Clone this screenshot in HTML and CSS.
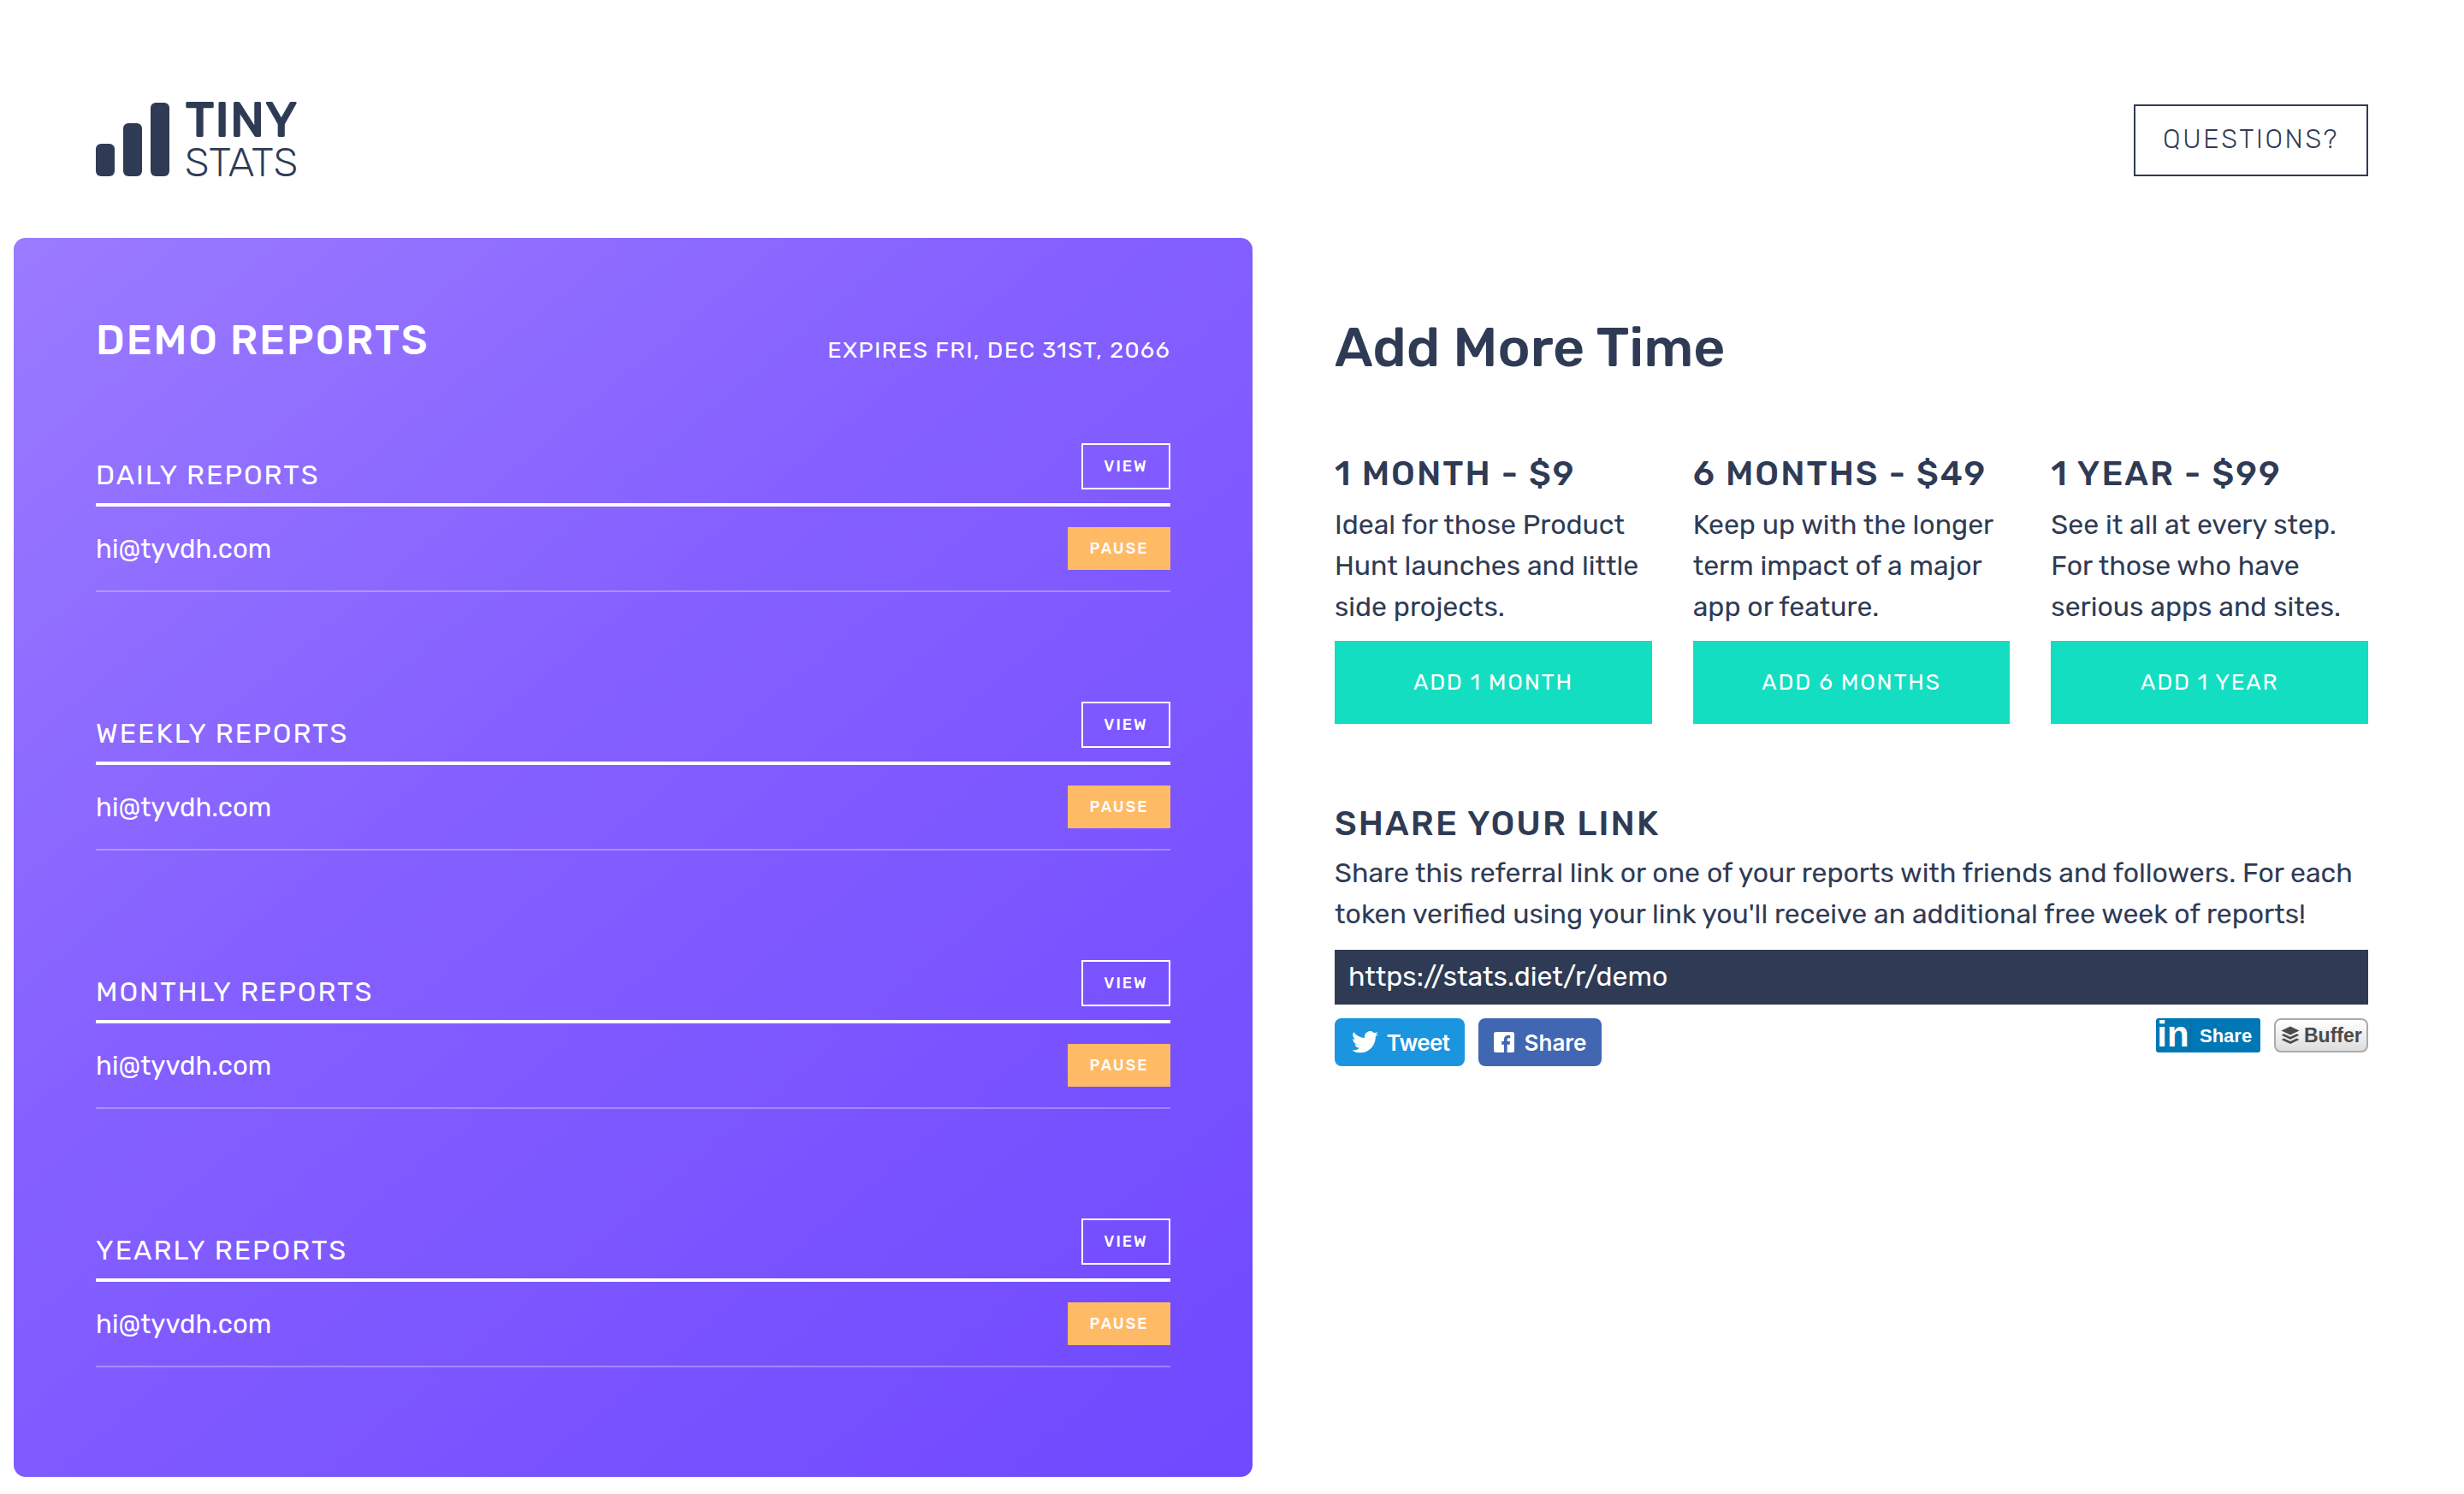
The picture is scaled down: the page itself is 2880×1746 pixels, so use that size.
FILE: index.html
```html
<!DOCTYPE html>
<html lang="en">
<head>
<meta charset="utf-8">
<title>Tiny Stats</title>
<link rel="stylesheet" href="styles.css">
</head>
<body>
<header class="top">
  <div class="logo">
    <svg class="logo-mark" width="86" height="86" viewBox="0 0 86 86"><rect x="0" y="48" width="22" height="38" rx="6"/><rect x="32" y="24" width="22" height="62" rx="6"/><rect x="64" y="0" width="22" height="86" rx="6"/></svg>
    <div class="logo-text"><div class="logo-tiny">TINY</div><div class="logo-stats">STATS</div></div>
  </div>
  <a class="questions">QUESTIONS?</a>
</header>
<main class="main">
  <section class="panel">
    <div class="panel-head"><h2>DEMO REPORTS</h2><span>EXPIRES FRI, DEC 31ST, 2066</span></div>
    <div class="report"><div class="report-head"><h3>DAILY REPORTS</h3><a class="view">VIEW</a></div><div class="report-row"><span>hi@tyvdh.com</span><a class="pause">PAUSE</a></div></div>
    <div class="report"><div class="report-head"><h3>WEEKLY REPORTS</h3><a class="view">VIEW</a></div><div class="report-row"><span>hi@tyvdh.com</span><a class="pause">PAUSE</a></div></div>
    <div class="report"><div class="report-head"><h3>MONTHLY REPORTS</h3><a class="view">VIEW</a></div><div class="report-row"><span>hi@tyvdh.com</span><a class="pause">PAUSE</a></div></div>
    <div class="report"><div class="report-head"><h3>YEARLY REPORTS</h3><a class="view">VIEW</a></div><div class="report-row"><span>hi@tyvdh.com</span><a class="pause">PAUSE</a></div></div>
  </section>
  <section class="side">
    <h1>Add More Time</h1>
    <div class="plans">
      <div class="plan"><h3>1 MONTH - $9</h3><p>Ideal for those Product Hunt launches and little side projects.</p><a class="add">ADD 1 MONTH</a></div>
      <div class="plan"><h3>6 MONTHS - $49</h3><p>Keep up with the longer term impact of a major app or feature.</p><a class="add">ADD 6 MONTHS</a></div>
      <div class="plan"><h3>1 YEAR - $99</h3><p>See it all at every step. For those who have serious apps and sites.</p><a class="add">ADD 1 YEAR</a></div>
    </div>
    <h3 class="share-title">SHARE YOUR LINK</h3>
    <p class="share-text">Share this referral link or one of your reports with friends and followers. For each token verified using your link you'll receive an additional free week of reports!</p>
    <div class="link">https://stats.diet/r/demo</div>
    <div class="socials">
      <a class="soc tw"><svg width="31" height="26" viewBox="0 0 24 20"><path fill="#fff" d="M24 2.4a9.8 9.8 0 0 1-2.8.8A4.900 4.900 0 0 0 23.300.5a9.800 9.800 0 0 1-3.100 1.200 4.900 4.900 0 0 0-8.400 4.500A14 14 0 0 1 1.700.900a4.900 4.900 0 0 0 1.500 6.600 4.900 4.900 0 0 1-2.200-.6v.1a4.900 4.900 0 0 0 3.900 4.800 4.900 4.900 0 0 1-2.200.1 4.900 4.900 0 0 0 4.600 3.400A9.900 9.900 0 0 1 0 17.300 13.900 13.900 0 0 0 7.500 19.500c9 0 14-7.500 14-14v-.6A10 10 0 0 0 24 2.400z"/></svg><span>Tweet</span></a>
      <a class="soc fb"><svg width="24" height="24" viewBox="0 0 24 24"><path fill="#fff" d="M21.500 0h-19A2.500 2.500 0 0 0 0 2.500v19A2.500 2.500 0 0 0 2.500 24H12v-9.300H9.200v-3.600H12V8.500c0-3 1.900-4.600 4.500-4.600 1.300 0 2.400.1 2.700.1v3.200h-1.800c-1.500 0-1.800.7-1.800 1.700v2.200h3.500l-.5 3.600h-3V24h5.900a2.500 2.500 0 0 0 2.500-2.500v-19A2.500 2.500 0 0 0 21.500 0z"/></svg><span>Share</span></a>
      <span class="spacer"></span>
      <a class="li"><span class="li-in">in</span><span class="li-share">Share</span></a>
      <a class="buffer"><svg width="24" height="24" viewBox="0 0 24 24"><path fill="#4a4a4a" d="M12 1.500l10.500 5L12 11.500l-10.500-5zM4.600 10.200L12 13.700l7.400-3.500 3.100 1.500L12 16.700 1.500 11.700zM4.600 15.500L12 19l7.400-3.500 3.100 1.500L12 22 1.500 17z"/></svg><span>Buffer</span></a>
    </div>
  </section>
</main>
</body>
</html>
```
FILE: styles.css
```css
* { box-sizing: border-box; }
html, body { margin: 0; padding: 0; }
body { width: 2880px; height: 1746px; overflow: hidden; background: #fff; color: #2f3b55; font-family: Rubik, "Open Sans", "Noto Sans", "Liberation Sans", sans-serif; font-size: 32px; }
.top { height: 278px; padding: 120px 112px 0 112px; display: flex; justify-content: space-between; align-items: flex-start; }
.logo { display: flex; gap: 18px; }
.logo-mark { fill: #2f3b55; }
.logo-text { margin-top: -5px; }
.logo-tiny { font-size: 58px; font-weight: 500; line-height: 52px; }
.logo-stats { font-size: 47px; font-weight: 300; line-height: 46px; }
.questions { width: 274px; height: 84px; margin-top: 2px; padding-bottom: 3px; border: 2px solid #2f3b55; display: flex; align-items: center; justify-content: center; font-size: 31px; font-weight: 300; letter-spacing: 2.600px; }
.main { display: flex; padding-left: 16px; }
.panel { width: 1448px; height: 1448px; border-radius: 14px; padding: 96px 96px 0; background: linear-gradient(140deg, #9b7bff 0%, #8560ff 40%, #7048ff 100%); color: #fff; }
.panel-head { display: flex; justify-content: space-between; height: 144px; align-items: flex-start; }
.panel-head h2 { margin: 0; font-size: 48px; font-weight: 500; letter-spacing: 2px; line-height: 48px; }
.panel-head span { font-size: 27px; letter-spacing: 1.300px; margin-top: 19px; }
.report { height: 302px; }
.report-head { display: flex; justify-content: space-between; align-items: flex-end; height: 74px; border-bottom: 4px solid #fff; padding-bottom: 16px; }
.report-head h3 { margin: 0; font-size: 32px; font-weight: 400; letter-spacing: 2px; line-height: 34px; }
.view { width: 104px; height: 54px; border: 2px solid #fff; font-size: 18px; font-weight: 500; letter-spacing: 2px; display: flex; align-items: center; justify-content: center; }
.report-row { height: 100px; display: flex; justify-content: space-between; align-items: center; border-bottom: 2px solid rgba(255,255,255,.3); font-size: 31px; }
.pause { width: 120px; height: 50px; background: #ffba66; font-size: 18px; font-weight: 500; letter-spacing: 2px; display: flex; align-items: center; justify-content: center; }
.side { margin-left: 96px; width: 1208px; padding-top: 90px; }
h1 { margin: 0; font-size: 64.500px; font-weight: 500; line-height: 76px; }
.plans { display: flex; gap: 48px; margin-top: 86px; }
.plan { flex: 1; }
.plan h3 { margin: 0; font-size: 40px; font-weight: 500; letter-spacing: 2px; line-height: 48px; }
.plan p { margin: 11px 0 0; line-height: 48px; font-size: 32px; height: 144px; }
.add { height: 97px; margin-top: 16px; background: #13dec1; color: #fff; font-size: 26px; font-weight: 400; letter-spacing: 1.800px; display: flex; align-items: center; justify-content: center; }
.share-title { margin: 93px 0 0; font-size: 40px; font-weight: 500; letter-spacing: 2.100px; line-height: 48px; }
.share-text { margin: 9px 0 0; line-height: 48px; font-size: 32px; }
.link { margin-top: 18px; height: 64px; background: #2f3b55; color: #fff; padding-left: 16px; line-height: 62px; font-size: 32px; }
.socials { display: flex; margin-top: 16px; align-items: flex-start; }
.soc { height: 56px; border-radius: 8px; color: #fff; display: flex; align-items: center; justify-content: center; font-size: 26px; font-weight: 600; font-family: Inter, "Open Sans", sans-serif; margin-right: 16px; }
.tw { width: 152px; background: #1b95e0; gap: 10px; padding-left: 2px; letter-spacing: -0.600px; }
.fb { width: 144px; background: #4267b2; gap: 12px; }
.spacer { flex: 1; }
.li { width: 122px; height: 40px; border-radius: 3px; background: #0077b5; color: #fff; display: flex; align-items: center; margin-right: 16px; font-family: "Liberation Sans", sans-serif; font-weight: 700; }
.li-in { width: 41px; height: 40px; font-size: 42px; line-height: 38px; text-align: center; border-right: 1px solid #066aa0; }
.li-share { font-size: 22px; margin: 2px 0 0 10px; }
.buffer { width: 110px; height: 40px; border: 2px solid #aaa; border-radius: 8px; background: linear-gradient(#fff, #ddd); color: #4a4a4a; display: flex; align-items: center; font-family: "Liberation Sans", sans-serif; font-size: 23px; font-weight: 700; padding-left: 5px; gap: 4px; }
```
